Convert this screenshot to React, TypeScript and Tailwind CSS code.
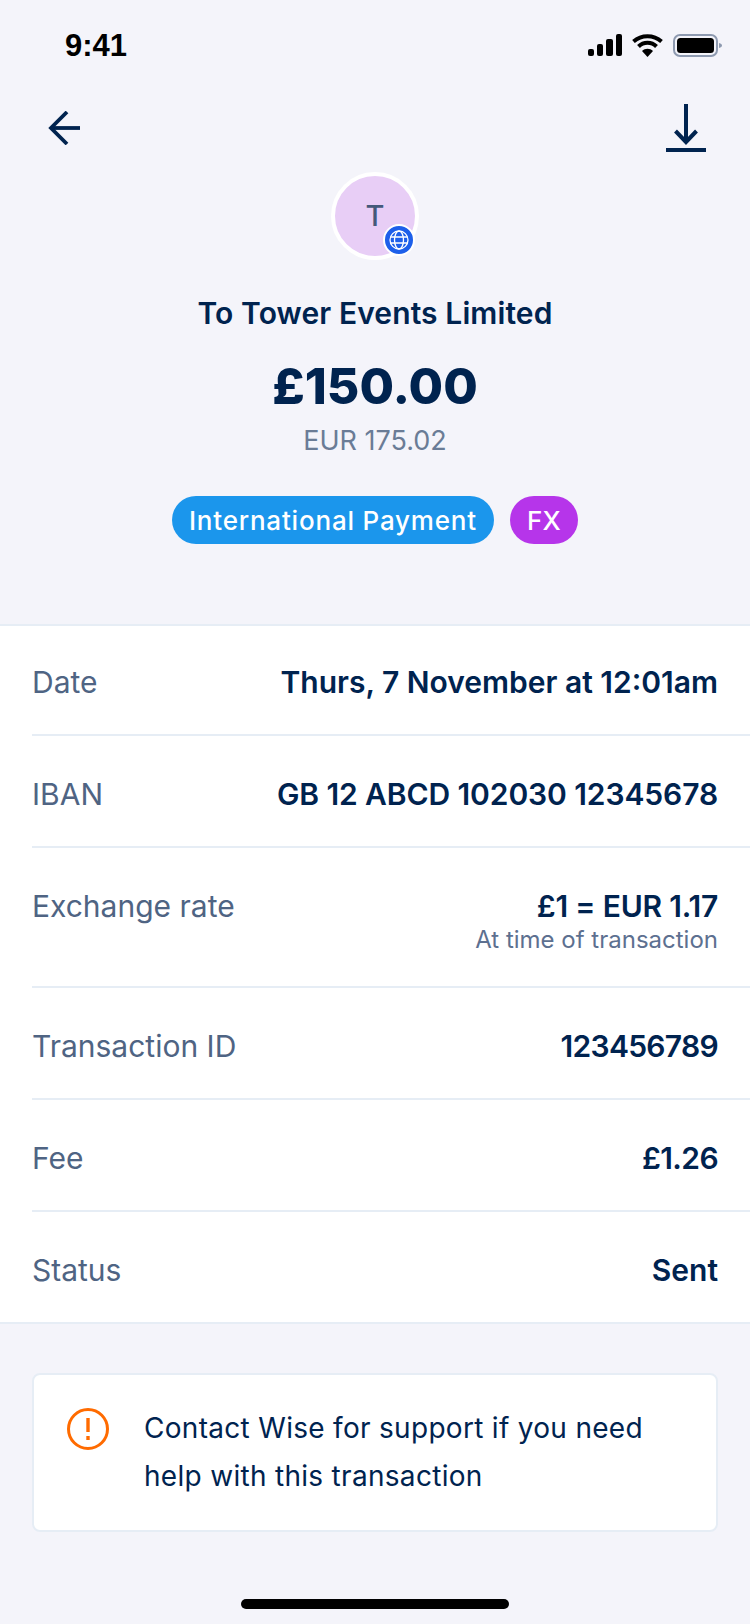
import React from "react";

const rows = [
  { label: "Date", value: "Thurs, 7 November at 12:01am", tight: "" },
  { label: "IBAN", value: "GB 12 ABCD 102030 12345678", tight: "tracking-[-0.1px]" },
  { label: "Exchange rate", value: "£1 = EUR 1.17", note: "At time of transaction", tight: "tracking-[-0.2px]" },
  { label: "Transaction ID", value: "123456789", tight: "tracking-[-0.7px]" },
  { label: "Fee", value: "£1.26", tight: "tracking-[-0.6px]" },
  { label: "Status", value: "Sent", tight: "" },
];

const StatusIcons = () => (
  <div className="flex items-center">
    {/* signal */}
    <svg width="34" height="22" viewBox="0 0 34 22" fill="#000">
      <rect x="0" y="15" width="6" height="7" rx="2" />
      <rect x="9" y="10" width="6" height="12" rx="2" />
      <rect x="18" y="5" width="7" height="17" rx="2" />
      <rect x="28" y="0" width="6" height="22" rx="2" />
    </svg>
    {/* wifi */}
    <svg className="ml-[10px]" width="31" height="23" viewBox="0 0 31 23" fill="none">
      <path d="M15.5 23 L10 17 C13 14 18 14 21 17 Z" fill="#000" />
      <path d="M6.5 12.5 C11.5 7.500 19.5 7.500 24.5 12.5" stroke="#000" strokeWidth="4" />
      <path d="M1.5 7.5 C9.5 0.500 21.5 0.500 29.5 7.5" stroke="#000" strokeWidth="4" />
    </svg>
    {/* battery */}
    <svg className="ml-[10px]" width="49" height="23" viewBox="0 0 49 23" fill="none">
      <rect x="1" y="1" width="43" height="21" rx="6" stroke="#8E9AB0" strokeWidth="2" />
      <rect x="4" y="4" width="37" height="15" rx="3.5" fill="#000" />
      <path d="M46 9 C48 9.5 49 10.5 49 11.5 C49 12.5 48 13.5 46 14 Z" fill="#8E9AB0" />
    </svg>
  </div>
);

export default function App() {
  return (
    <div className="flex h-[1624px] w-[750px] flex-col overflow-hidden bg-[#f4f4fa] font-['Inter',sans-serif] text-[#00234f]">
      {/* Status bar */}
      <div className="flex items-center justify-between pl-[65px] pr-[28px] pt-[27px]">
        <span className="relative top-[1px] font-['Liberation_Sans',sans-serif] text-[31px] font-bold leading-[36px] text-black">9:41</span>
        <StatusIcons />
      </div>

      {/* Nav */}
      <div className="mt-[41px] flex items-center justify-between pl-[48px] pr-[44px]">
        <svg width="32" height="34" viewBox="0 0 32 34" fill="none" stroke="#00234f" strokeWidth="3.8">
          <path d="M32 17H3" />
          <path d="M19 1 3 17l16 16" />
        </svg>
        <svg width="40" height="48" viewBox="0 0 40 48" fill="none" stroke="#00234f" strokeWidth="4">
          <path d="M20 0v38" />
          <path d="M9.5 27 20 38l10.500-11" />
          <path d="M0 46h40" />
        </svg>
      </div>

      {/* Summary */}
      <div className="mt-[20px] flex flex-col items-center">
        <div className="relative flex h-[88px] w-[88px] items-center justify-center rounded-full border-4 border-white bg-[#e8cef6]">
          <span className="-mt-[2px] text-[29px] font-medium leading-none text-[#44597a]">T</span>
          <div className="absolute bottom-[0px] right-[0px] flex h-[32px] w-[32px] items-center justify-center rounded-full border-2 border-white bg-[#1d5fea]">
            <svg width="20" height="20" viewBox="0 0 20 20" fill="none" stroke="#fff" strokeWidth="1.3">
              <circle cx="10" cy="10" r="9" />
              <ellipse cx="10" cy="10" rx="4.500" ry="9" />
              <path d="M1.500 7h17M1.500 13h17" />
            </svg>
          </div>
        </div>
        <h1 className="mt-[33px] text-[30px] font-semibold leading-[40px] tracking-[0.1px]">To Tower Events Limited</h1>
        <div className="mt-[23px] text-[50px] font-extrabold leading-[60px]">£150.00</div>
        <div className="mt-[7px] text-[27px] leading-[36px] text-[#6a7c96]">EUR 175.02</div>
        <div className="mt-[37px] flex gap-[16px]">
          <span className="flex h-[48px] items-center rounded-full bg-[#1b96ec] px-[17px] text-[26px] font-medium tracking-[0.8px] text-white">
            International Payment
          </span>
          <span className="flex h-[48px] items-center rounded-full bg-[#b635ea] px-[17px] text-[26px] font-medium tracking-[0.3px] text-white">
            FX
          </span>
        </div>
      </div>

      {/* Details */}
      <div className="mt-[80px] border-y-2 border-[#e6edf5] bg-white">
        {rows.map((row, i) => (
          <div
            key={row.label}
            className={
              i === 0
                ? "ml-[32px] flex justify-between border-b-2 border-[#e6edf5] pb-[32px] pr-[32px] pt-[36px]"
                : i === rows.length - 1
                  ? "ml-[32px] flex justify-between pb-[32px] pr-[32px] pt-[38px]"
                  : "ml-[32px] flex justify-between border-b-2 border-[#e6edf5] pb-[32px] pr-[32px] pt-[38px]"
            }
          >
            <span className="text-[30px] leading-[40px] text-[#4f6483]">{row.label}</span>
            <div className="text-right">
              <div className={`text-[30px] font-semibold leading-[40px] ${row.tight}`}>{row.value}</div>
              {row.note && <div className="text-[24px] leading-[28px] text-[#5d7090]">{row.note}</div>}
            </div>
          </div>
        ))}
      </div>

      {/* Support */}
      <div className="mx-[32px] mt-[49px] flex h-[159px] gap-[35px] rounded-[8px] border-2 border-[#e6edf5] bg-white pl-[33px] pt-[33px]">
        <svg className="shrink-0" width="42" height="42" viewBox="0 0 42 42" fill="none" stroke="#ff6b00">
          <circle cx="21" cy="21" r="19.500" strokeWidth="3" />
          <path d="M21 10v14" strokeWidth="3.400" />
          <path d="M21 28v4" strokeWidth="3.400" />
        </svg>
        <p className="-mt-[4px] text-[28px] leading-[48px] tracking-[0.3px]">
          Contact Wise for support if you need
          <br />
          help with this transaction
        </p>
      </div>

      {/* Home indicator */}
      <div className="mx-auto mt-[67px] h-[10px] w-[268px] rounded-full bg-black" />
    </div>
  );
}
